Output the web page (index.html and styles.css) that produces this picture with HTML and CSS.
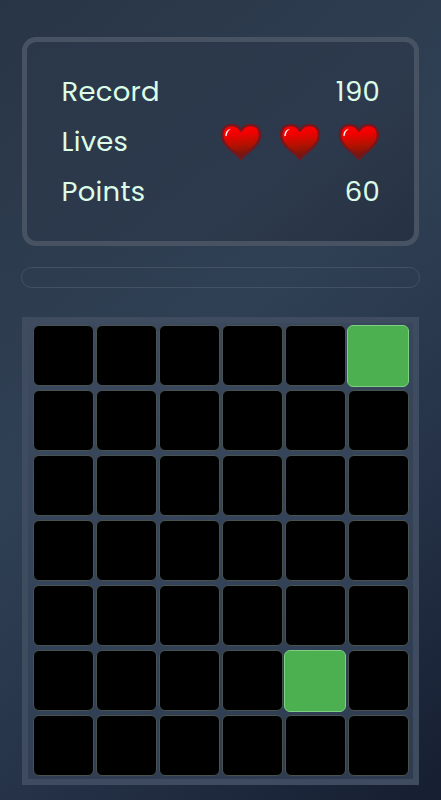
FILE: index.html
```html
<!DOCTYPE html>
<html lang="en">
<head>
<meta charset="utf-8">
<title>Memory grid</title>
<link rel="stylesheet" href="styles.css">
</head>
<body>
<svg width="0" height="0" class="defs" aria-hidden="true">
  <defs>
    <linearGradient id="red" x1="0" y1="0" x2="0.12" y2="1">
      <stop offset="0" stop-color="#ff0000"/><stop offset=".28" stop-color="#f40000"/><stop offset=".62" stop-color="#b71100"/><stop offset="1" stop-color="#681710"/>
    </linearGradient>
    <symbol id="heart" viewBox="0 0 42 38">
      <path d="M21 36C17.500 30.500 2 23.500 2 12C2 5.500 6 2 11.500 2C16 2 19 4 21 7.500C23 4 26 2 30.500 2C36 2 40 5.500 40 12C40 23.500 24.500 30.500 21 36Z" fill="url(#red)" stroke="#711820" stroke-width="2.600" stroke-linejoin="round"/>
      <path d="M5.500 13C5.400 9.500 7.300 6.300 10.500 6.300C8.300 7.500 6.900 9.700 6.500 13Z" fill="#fff" stroke="#fff" stroke-width=".2"/>
    </symbol>
  </defs>
</svg>
<main class="game">
  <section class="stats">
    <div class="row"><span>Record</span><span class="value">190</span></div>
    <div class="row"><span>Lives</span><span class="hearts"><svg><use href="#heart"/></svg><svg><use href="#heart"/></svg><svg><use href="#heart"/></svg></span></div>
    <div class="row"><span>Points</span><span class="value">60</span></div>
  </section>
  <div class="progress"></div>
  <section class="board">
    <i></i><i></i><i></i><i></i><i></i><i class="on"></i>
    <i></i><i></i><i></i><i></i><i></i><i></i>
    <i></i><i></i><i></i><i></i><i></i><i></i>
    <i></i><i></i><i></i><i></i><i></i><i></i>
    <i></i><i></i><i></i><i></i><i></i><i></i>
    <i></i><i></i><i></i><i></i><i class="on"></i><i></i>
    <i></i><i></i><i></i><i></i><i></i><i></i>
  </section>
</main>
</body>
</html>
```
FILE: styles.css
```css
* { box-sizing: border-box; }
body {
  margin: 0;
  height: 800px;
  overflow: hidden;
  background: linear-gradient(141deg, #283546 0%, #304054 43%, #27354a 66%, #161e31 100%);
  color: #dcfce7;
  font-family: Poppins, Inter, "Liberation Sans", sans-serif;
}
.defs { position: absolute; }
.game {
  display: flex;
  flex-direction: column;
  align-items: center;
  padding-top: 37px;
}
.stats {
  width: 397px;
  height: 209px;
  padding: 25px 35px 0 34.5px;
  border: 5px solid #475362;
  border-radius: 14px;
  background: linear-gradient(141deg, #2a384a, #2d3a4d 65%, #263242);
}
.row {
  display: flex;
  justify-content: space-between;
  align-items: center;
  height: 50px;
  font-size: 27.5px;
  font-weight: 400;
  line-height: 50px;
  letter-spacing: .25px;
}
.value { margin-right: -1px; }
.hearts { display: flex; gap: 17px; margin-right: -1px; }
.hearts svg { width: 42px; height: 38px; }
.progress {
  width: 399px;
  height: 21px;
  margin-top: 21px;
  border: 1px solid #445163;
  border-radius: 11px;
}
.board {
  display: grid;
  grid-template: repeat(7, 61px) / repeat(6, 61px);
  gap: 4px 2px;
  width: 397px;
  height: 468px;
  margin-top: 29px;
  padding: 2px 5px;
  border: 6px solid #3f4c60;
  background: linear-gradient(160deg, #3d4a5f, #344359 50%, #2e3b50);
}
.board i {
  border: 1px solid #48534f;
  border-radius: 6px;
  background: #000;
}
.board .on {
  margin: 0 0 -1px -1px;
  border-color: #7fcf84;
  background: #4caf50;
}
```
